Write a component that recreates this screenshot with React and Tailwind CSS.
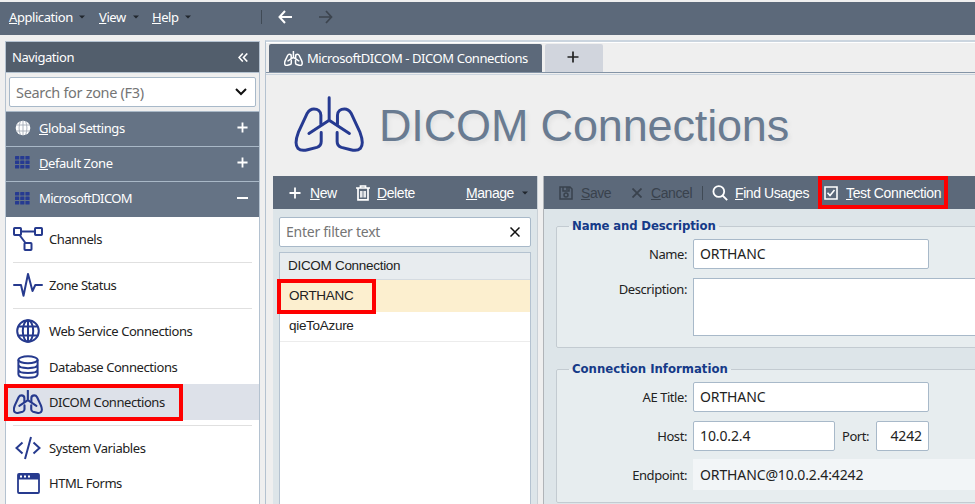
const SANS = "font-['Liberation_Sans',Arial,sans-serif]";

function Lungs({ className, stroke = 7 }) {
  return (
    <svg viewBox="100 196 214 170" className={`shrink-0 ${className}`} fill="none" stroke="currentColor" strokeWidth={stroke} strokeLinecap="round" strokeLinejoin="round">
      <path d="M206 200V268M145 308L206 268L267 308" />
      <path d="M181 280V253C181 241 172 234 160 234C150 234 144 240 140 247L113 305C105 326 104 344 112 353C120 361 130 360 141 357L169 350C178 347 182 341 182 332V305" />
      <path d="M231 280V253C231 241 240 234 252 234C262 234 268 240 272 247L299 305C307 326 308 344 300 353C292 361 282 360 271 357L243 350C234 347 230 341 230 332V305" />
    </svg>
  );
}

function Caret({ className = "" }) {
  return (
    <svg viewBox="0 0 6 4" className={`h-[4px] w-[6px] shrink-0 ${className}`}>
      <path d="M0 .5H6L3 3.5Z" fill="#20262d" />
    </svg>
  );
}

function Plus({ className, w = 2 }) {
  return (
    <svg viewBox="0 0 12 12" className={className} stroke="currentColor" strokeWidth={w}>
      <path d="M6 .5V11.5M.5 6H11.5" />
    </svg>
  );
}

function Globe({ className, solid }) {
  return solid ? (
    <svg viewBox="0 0 16 16" className={className} fill="none">
      <circle cx="8" cy="8" r="7.3" fill="#fff" />
      <path d="M8 .7V15.3M1 5H15M1 11H15M5.5 1C3.6 5 3.6 11 5.5 15M10.500 1C12.400 5 12.400 11 10.500 15" stroke="#a5adb8" strokeWidth=".9" />
    </svg>
  ) : (
    <svg viewBox="0 0 24 24" className={className} fill="none" stroke="currentColor" strokeWidth="2">
      <circle cx="12" cy="12" r="10.800" />
      <ellipse cx="12" cy="12" rx="5.200" ry="10.800" />
      <path d="M12 1V23M2.500 7.500H21.500M2.500 16.500H21.500" />
    </svg>
  );
}

function Grid({ className }) {
  return (
    <svg viewBox="0 0 15 13" className={className} fill="#263a91">
      {[0, 5.2, 10.4].map((x) => [0, 4.5, 9].map((y) => <rect key={`${x}-${y}`} x={x} y={y} width="4.200" height="3.600" rx=".6" />))}
    </svg>
  );
}

const icons = {
  channels: (
    <svg viewBox="0 0 30 24" className="h-[24px] w-[30px]" fill="none" stroke="currentColor" strokeWidth="2">
      <rect x="1" y="1" width="7" height="7" rx=".7" />
      <rect x="22" y="1" width="7" height="7" rx=".7" />
      <rect x="11.500" y="16" width="7" height="7" rx=".7" />
      <path d="M8 4.500H22M6.500 8L12.500 16" />
    </svg>
  ),
  status: (
    <svg viewBox="0 0 30 24" className="h-[24px] w-[30px]" fill="none" stroke="currentColor" strokeWidth="2" strokeLinejoin="round" strokeLinecap="round">
      <path d="M1 12H8L10.500 22.800L15 1L19.500 18L22.300 12H29" />
    </svg>
  ),
  globe: <Globe className="h-[24px] w-[24px]" />,
  database: (
    <svg viewBox="0 0 22 24" className="h-[24px] w-[22px]" fill="none" stroke="currentColor" strokeWidth="2">
      <ellipse cx="11" cy="4.800" rx="9.600" ry="3.500" />
      <path d="M1.400 4.800V19.300C1.400 24 20.600 24 20.600 19.300V4.800M1.400 9.600C1.400 14.300 20.600 14.300 20.600 9.600M1.400 14.400C1.400 19.100 20.600 19.100 20.600 14.400" />
    </svg>
  ),
  lungs: <Lungs className="h-[24px] w-[30px]" stroke={15} />,
  code: (
    <svg viewBox="0 0 26 24" className="h-[24px] w-[26px]" fill="none" stroke="currentColor" strokeWidth="2">
      <path d="M7.500 6.500L1.500 12L7.500 17.500M18.500 6.500L24.500 12L18.500 17.500M16 1L10 23" />
    </svg>
  ),
  form: (
    <svg viewBox="0 0 23 21" className="h-[21px] w-[23px]">
      <rect x="1" y="1" width="21" height="19" rx="1" fill="none" stroke="currentColor" strokeWidth="1.800" />
      <path d="M1 1H22V6.500H1Z" fill="currentColor" />
      <path d="M3 3.500H5M7 3.500H9M11 3.500H13" stroke="#fff" strokeWidth="1.800" />
    </svg>
  ),
};

function NavItem({ icon, label, h, selected }) {
  return (
    <div className={`flex shrink-0 items-center ${h} ${selected ? "bg-[#dde1e9]" : ""}`}>
      <span className="ml-[7px] flex w-[30px] justify-center text-[#263a8e]">{icons[icon]}</span>
      <span className="ml-[6px]">{label}</span>
    </div>
  );
}

function Divider() {
  return <div className="mr-[7px] ml-[7px] h-px shrink-0 bg-[#e0e0e0]" />;
}

function ZoneRow({ icon, children, open, h }) {
  return (
    <div className={`flex shrink-0 items-center border-t border-[#a9b8c7] bg-[#657385] pr-[11px] pb-[3px] pl-[8px] text-white ${h}`}>
      <span className="flex w-[17px] justify-center">{icon}</span>
      <span className="ml-[8px] flex-1">{children}</span>
      {open ? <span className="h-[2px] w-[11px] bg-white" /> : <Plus className="h-[11px] w-[11px]" w={2} />}
    </div>
  );
}

function Field({ className = "", children }) {
  return (
    <div className={`flex h-[30px] shrink-0 items-center rounded-[2px] border border-[#a8b9c9] bg-white px-[6px] ${className}`}>{children}</div>
  );
}

const VALUE = "text-[14px] tracking-[-0.12px]";

function Legend({ children, className = "" }) {
  return <legend className={`ml-[12px] h-[20px] px-[3px] font-['DejaVu_Sans_Condensed','DejaVu_Sans',sans-serif] text-[13px] leading-[20px] font-bold text-[#153a88] ${className}`}>{children}</legend>;
}

function Label({ children, className = "" }) {
  return <span className={`w-[136px] shrink-0 pr-[6px] text-right ${className}`}>{children}</span>;
}

function Sidebar() {
  return (
    <aside className="mt-[6px] ml-[5px] flex w-[255px] shrink-0 flex-col border border-b-0 border-[#b4c2d0] bg-white">
      <div className="flex h-[30px] shrink-0 items-center justify-between bg-[#525e6c] pr-[11px] pl-[6px] text-white">
        <span>Navigation</span>
        <svg viewBox="0 0 10 9" className="h-[9px] w-[10px]" fill="none" stroke="currentColor" strokeWidth="1.600"><path d="M4.800.5L1 4.500L4.800 8.500M9.300.5L5.500 4.500L9.300 8.500" /></svg>
      </div>
      <div className="h-[39px] shrink-0 border-t border-[#b4c2d0] bg-[#efefef] px-[3px] pt-[4px]">
        <Field className="justify-between pr-[8px] text-[14.500px] text-[#757575]">
          <span className="tracking-[-0.32px]">Search for zone (F3)</span>
          <svg viewBox="0 0 12 8" className="h-[8px] w-[12px]" fill="none" stroke="#111" strokeWidth="2"><path d="M1 1L6 6L11 1" /></svg>
        </Field>
      </div>
      <ZoneRow h="h-[35px]" icon={<Globe solid className="h-[16px] w-[16px]" />}><u>G</u>lobal Settings</ZoneRow>
      <ZoneRow h="h-[35px]" icon={<Grid className="h-[13px] w-[15px]" />}><u>D</u>efault Zone</ZoneRow>
      <ZoneRow h="h-[36px]" open icon={<Grid className="h-[13px] w-[15px]" />}><span className="tracking-[-0.6px]">MicrosoftDICOM</span></ZoneRow>
      <NavItem icon="channels" label="Channels" h="h-[45px] pb-[2px]" />
      <Divider />
      <NavItem icon="status" label="Zone Status" h="h-[45px] pb-[2px]" />
      <Divider />
      <NavItem icon="globe" label="Web Service Connections" h="h-[45px] pb-[2px]" />
      <NavItem icon="database" label="Database Connections" h="h-[30px] pb-[4px]" />
      <NavItem icon="lungs" label="DICOM Connections" h="h-[36px]" selected />
      <div className="h-[5px] shrink-0" />
      <Divider />
      <NavItem icon="code" label="System Variables" h="h-[44px]" />
      <NavItem icon="form" label="HTML Forms" h="h-[26px]" />
    </aside>
  );
}

function ListPanel() {
  return (
    <section className={`flex w-[265px] shrink-0 flex-col border-r border-[#c9d0d6] bg-[#dde5e9] ${SANS}`}>
      <div className="flex h-[33px] shrink-0 items-center bg-[#5c697a] text-[14px] tracking-[-0.42px] text-white">
        <Plus className="ml-[16px] h-[12px] w-[12px]" w={1.8} />
        <span className="ml-[9px] w-[27px]"><u>N</u>ew</span>
        <svg viewBox="0 0 14 16" className="ml-[19px] h-[16px] w-[14px]" fill="none" stroke="currentColor" strokeWidth="1.700"><path d="M0 3H14M4.500 3V1H9.500V3M2 3V14.800H12V3M5 6V12.500M9 6V12.500" /><path d="M7 6V12.500" strokeWidth="1" /></svg>
        <span className="ml-[7px]"><u>D</u>elete</span>
        <span className="ml-auto"><u>M</u>anage</span>
        <Caret className="mr-[9px] ml-[8px]" />
      </div>
      <div className="flex flex-1 flex-col px-[6px] pt-[8px]">
        <Field className="justify-between pr-[10px] font-['Noto_Sans',sans-serif] text-[14px] text-[#757575]">
          <span className="tracking-[-0.25px]">Enter filter text</span>
          <svg viewBox="0 0 10 10" className="h-[10px] w-[10px]" stroke="#111" strokeWidth="1.500"><path d="M.5.5L9.500 9.500M9.500.5L.5 9.500" /></svg>
        </Field>
        <div className="mt-[5px] flex-1 border border-b-0 border-[#b4c2d0] bg-white text-[13.500px] tracking-[-0.3px] text-[#222]">
          <div className="flex h-[27px] items-center border-b border-[#d5dbe1] bg-[#e8ecef] pl-[8px]">DICOM Connection</div>
          <div className="relative flex h-[32px] items-center bg-[#fcefcf] pl-[9px]">
            ORTHANC
            <div className="absolute top-[-1px] left-[-3px] h-[35px] w-[99px] border-4 border-[#fe0000]" />
          </div>
          <div className="flex h-[30px] items-center border-b border-[#ececec] pb-[2px] pl-[9px]">qieToAzure</div>
        </div>
      </div>
    </section>
  );
}

function DetailPanel() {
  return (
    <section className="ml-[5px] flex flex-1 flex-col overflow-hidden border-l border-[#b0b4b8] bg-[#dde5e9]">
      <div className={`flex h-[33px] shrink-0 items-center bg-[#5c697a] ${SANS} text-[14px] tracking-[-0.42px] text-white`}>
        <svg viewBox="0 0 14 14" className="ml-[15px] h-[14px] w-[14px] shrink-0" fill="none" stroke="#39424d" strokeWidth="1.500"><path d="M1 1H11L13 3V13H1ZM4 1V5H10V1M8 1V4" /><circle cx="7" cy="9" r="2" /></svg>
        <span className="ml-[8px] w-[30px] text-[#39424d]"><u>S</u>ave</span>
        <svg viewBox="0 0 10 10" className="ml-[21px] h-[10px] w-[10px] shrink-0" stroke="#39424d" strokeWidth="1.800"><path d="M.5.5L9.500 9.500M9.500.5L.5 9.500" /></svg>
        <span className="ml-[9px] w-[42px] text-[#39424d]"><u>C</u>ancel</span>
        <span className="ml-[9px] h-[14px] w-px shrink-0 bg-[#404a55]" />
        <svg viewBox="0 0 16 16" className="ml-[9px] h-[16px] w-[16px] shrink-0" fill="none" stroke="currentColor" strokeWidth="1.800"><circle cx="6.800" cy="6.500" r="5.400" /><path d="M10.500 10.500L15.200 15.200" /></svg>
        <span className="ml-[7px] w-[74px] shrink-0 whitespace-nowrap"><u>F</u>ind Usages</span>
        <div className="ml-[9px] flex h-[33px] w-[130px] shrink-0 items-center border-4 border-[#fe0000] pl-[2px]">
          <svg viewBox="0 0 14 14" className="h-[14px] w-[14px] shrink-0" fill="none" stroke="currentColor" strokeWidth="1.600"><path d="M1 1H13V13H1ZM3.500 6.800L6 9.500L10.500 4" /></svg>
          <span className="ml-[8px] tracking-[-0.35px] whitespace-nowrap"><u>T</u>est Connection</span>
        </div>
      </div>
      <div className="h-[7px] shrink-0" />
      <fieldset className="ml-[12px] h-[132px] w-[430px] shrink-0 rounded-[2px] border border-[#c3cbd1] bg-[#e7edef]">
        <Legend className="tracking-[-0.13px]">Name and Description</Legend>
        <div className="mt-[3px] flex items-center"><Label>Name:</Label><Field className={`w-[236px] ${VALUE}`}>ORTHANC</Field></div>
        <div className="mt-[9px] flex"><Label className="pt-[2px]">Description:</Label><div className="h-[58px] flex-1 border border-r-0 border-[#a8b9c9] bg-white" /></div>
      </fieldset>
      <fieldset className="mt-[11px] ml-[12px] h-[144px] w-[430px] shrink-0 rounded-[2px] border border-[#c3cbd1] bg-[#e7edef]">
        <Legend className="tracking-normal">Connection Information</Legend>
        <div className="mt-[3px] flex items-center"><Label>AE Title:</Label><Field className={`w-[236px] ${VALUE}`}>ORTHANC</Field></div>
        <div className="mt-[9px] flex items-center">
          <Label>Host:</Label><Field className={`w-[142px] ${VALUE}`}>10.0.2.4</Field>
          <span className="ml-[7px] w-[34px]">Port:</span><Field className={`w-[53px] justify-end ${VALUE}`}>4242</Field>
        </div>
        <div className="mt-[8px] flex items-center"><Label>Endpoint:</Label><div className={`flex h-[31px] flex-1 items-center bg-[#f2f5f7] pl-[7px] ${VALUE}`}>ORTHANC@10.0.2.4:4242</div></div>
      </fieldset>
    </section>
  );
}

export default function App() {
  return (
    <div className="relative flex h-[504px] w-[975px] flex-col overflow-hidden bg-[#efefef] font-['Noto_Sans',sans-serif] text-[13px] leading-[18px] tracking-[-0.43px] text-[#222]">
      <header className="mt-[2px] flex h-[33px] shrink-0 items-center bg-[#5c697a] pb-[3px] text-white">
        <span className="ml-[9px] w-[65px]"><u>A</u>pplication</span><Caret className="ml-[5px]" />
        <span className="ml-[14px] w-[28px]"><u>V</u>iew</span><Caret className="ml-[6px]" />
        <span className="ml-[13px] w-[28px]"><u>H</u>elp</span><Caret className="ml-[5px]" />
        <span className="ml-[70px] h-[14px] w-px bg-[#404a55]" />
        <svg viewBox="0 0 14 14" className="ml-[16px] h-[14px] w-[14px]" fill="none" stroke="currentColor" strokeWidth="2"><path d="M7 1L1.500 7L7 13M1.500 7H14" /></svg>
        <svg viewBox="0 0 14 14" className="ml-[27px] h-[14px] w-[14px]" fill="none" stroke="#3c444e" strokeWidth="1.700"><path d="M7 1L12.500 7L7 13M12.500 7H0" /></svg>
      </header>
      <div className="flex min-h-0 flex-1">
        <Sidebar />
        <main className="mt-[5px] ml-[5px] flex min-w-0 flex-1 flex-col border-t-2 border-l border-[#cbd5df] border-l-[#b4c2d0]">
          <div className="flex h-[31px] shrink-0 border-t border-b border-t-white border-b-[#8494a6] pl-[3px]">
            <div className="mt-[1px] flex w-[273px] items-center rounded-t-[2px] bg-[#5c697a] pl-[15px] text-white">
              <Lungs className="h-[15px] w-[19px]" stroke={17} />
              <span className="ml-[4px] whitespace-nowrap">MicrosoftDICOM - DICOM Connections</span>
            </div>
            <div className="mt-[1px] ml-[3px] flex w-[58px] items-center justify-center rounded-t-[2px] bg-[#d1d5dd] pr-[3px] pb-[2px]"><Plus className="h-[12px] w-[12px] text-[#222]" w={1.7} /></div>
          </div>
          <div className="mt-[1px] flex h-[102px] shrink-0 border-t border-[#cbd5df]">
            <Lungs className="mt-[21px] ml-[28px] h-[57px] w-[71px] text-[#263a91]" stroke={9} />
            <h1 className={`mt-[25px] ml-[14px] ${SANS} text-[45px] leading-[52px] tracking-[-0.15px] whitespace-nowrap text-[#697b91] [text-shadow:2px_3px_4px_#e0e0e0]`}>DICOM Connections</h1>
          </div>
          <div className="flex min-h-0 flex-1 pl-[7px]">
            <ListPanel />
            <DetailPanel />
          </div>
        </main>
      </div>
      <div className="absolute top-[384px] left-[4px] h-[37px] w-[179px] border-4 border-[#fe0000]" />
    </div>
  );
}
